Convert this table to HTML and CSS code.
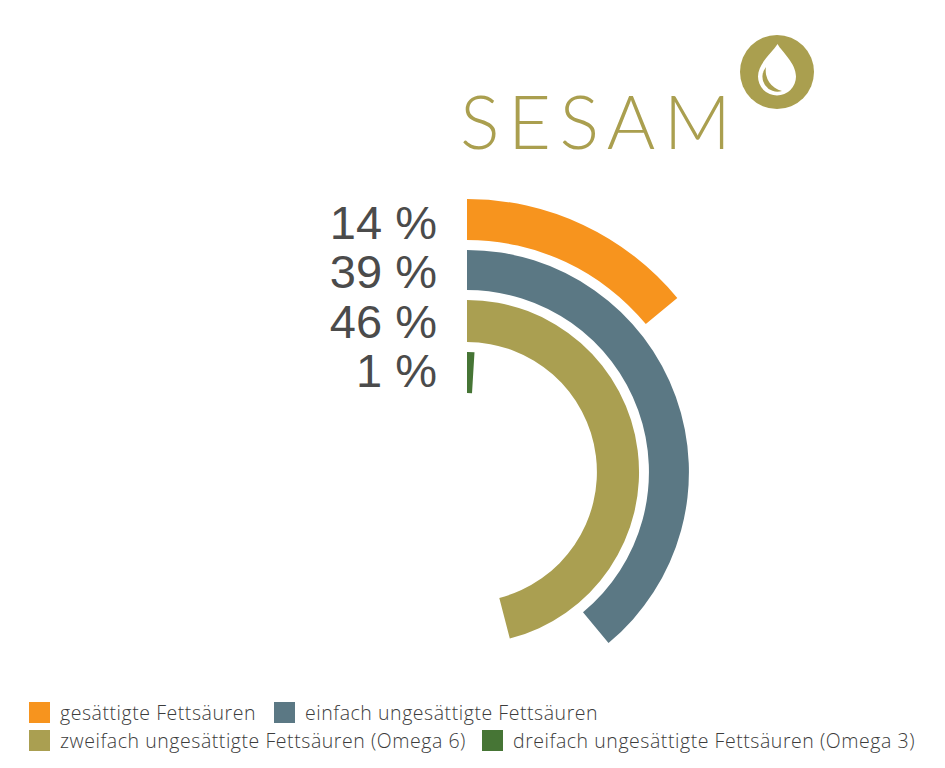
FILE: index.html
```html
<!DOCTYPE html>
<html lang="de">
<head>
<meta charset="utf-8">
<title>Sesam Fettsäuren</title>
<link rel="stylesheet" href="styles.css">
</head>
<body>
<div class="page">
  <header class="brand">
    <h1 class="title">SESAM</h1>
    <svg class="logo" viewBox="0 0 74 74" width="74" height="74" aria-hidden="true">
      <circle cx="37" cy="37" r="37" fill="#aa9f4f"/>
      <path d="M37.5 9 C33 17 18 28 18 41.5 A19 19 0 0 0 56 41.5 C56 28 42 17 37.5 9 Z" fill="#fff"/>
      <path d="M26 32 A15 15 0 0 0 42 56 A21 21 0 0 1 26 32 Z" fill="#aa9f4f"/>
    </svg>
  </header>

  <section class="chart">
    <div class="labels">
      <div class="label">14 %</div>
      <div class="label">39 %</div>
      <div class="label">46 %</div>
      <div class="label">1 %</div>
    </div>
    <svg class="rings" viewBox="440 190 310 460" width="310" height="460" aria-hidden="true">
      <path class="arc-orange" d="M467 199 A273 273 0 0 1 677.3 298.0 L645.8 324.1 A232 232 0 0 0 467 240 Z"/>
      <path class="arc-blue" d="M467 250 A222 222 0 0 1 608.5 643.0 L583.0 612.2 A182 182 0 0 0 467 290 Z"/>
      <path class="arc-olive" d="M467 300 A172 172 0 0 1 509.8 638.6 L499.3 597.9 A130 130 0 0 0 467 342 Z"/>
      <path class="arc-green" d="M467 352 A120 120 0 0 1 474.5 352.2 L472.0 393.2 A79 79 0 0 0 467 393 Z"/>
    </svg>
  </section>

  <footer class="legend">
    <div class="legend-row row-one">
      <div class="item"><span class="swatch sw-orange"></span><span class="text">gesättigte Fettsäuren</span></div>
      <div class="item"><span class="swatch sw-blue"></span><span class="text">einfach ungesättigte Fettsäuren</span></div>
    </div>
    <div class="legend-row row-two">
      <div class="item"><span class="swatch sw-olive"></span><span class="text">zweifach ungesättigte Fettsäuren (Omega 6)</span></div>
      <div class="item"><span class="swatch sw-green"></span><span class="text">dreifach ungesättigte Fettsäuren (Omega 3)</span></div>
    </div>
  </footer>
</div>
</body>
</html>
```
FILE: styles.css
```css
* { box-sizing: border-box; }
html, body { margin: 0; padding: 0; background: #fff; }
.page {
  width: 945px;
  height: 768px;
  overflow: hidden;
  font-family: "Liberation Sans", Arial, sans-serif;
}
.brand {
  display: grid;
  grid-template-columns: 280px 74px;
  align-items: start;
  padding: 35px 0 0 460px;
  height: 190px;
}
.title {
  margin: 49px 0 0 0;
  font-family: "Lato", "Open Sans", sans-serif;
  font-weight: 300;
  font-size: 74px;
  line-height: 74px;
  letter-spacing: 8.5px;
  color: #aa9f4f;
}
.logo { display: block; }

.chart {
  display: flex;
  height: 460px;
}
.labels {
  width: 437px;
  padding-top: 8px;
  text-align: right;
  color: #4b4b4b;
  font-size: 47px;
  line-height: 49.3px;
}
.rings { display: block; margin-left: 3px; }
.arc-orange { fill: #f7941e; }
.arc-blue { fill: #5b7884; }
.arc-olive { fill: #aa9f51; }
.arc-green { fill: #467535; }

.legend {
  padding: 52px 0 0 29px;
  display: flex;
  flex-direction: column;
  gap: 7px;
  font-family: "Open Sans", "Lato", sans-serif;
  font-weight: 300;
  font-size: 19.5px;
  letter-spacing: 0.55px;
  color: #3c3c3c;
}
.legend-row { display: flex; align-items: center; }
.row-one { gap: 18px; }
.row-two { gap: 16px; }
.item { display: flex; align-items: center; gap: 10px; }
.swatch { width: 21px; height: 21px; display: block; }
.text { line-height: 21px; }
.sw-orange { background: #f7941e; }
.sw-blue { background: #5b7884; }
.sw-olive { background: #aa9f51; }
.sw-green { background: #467535; }
```
